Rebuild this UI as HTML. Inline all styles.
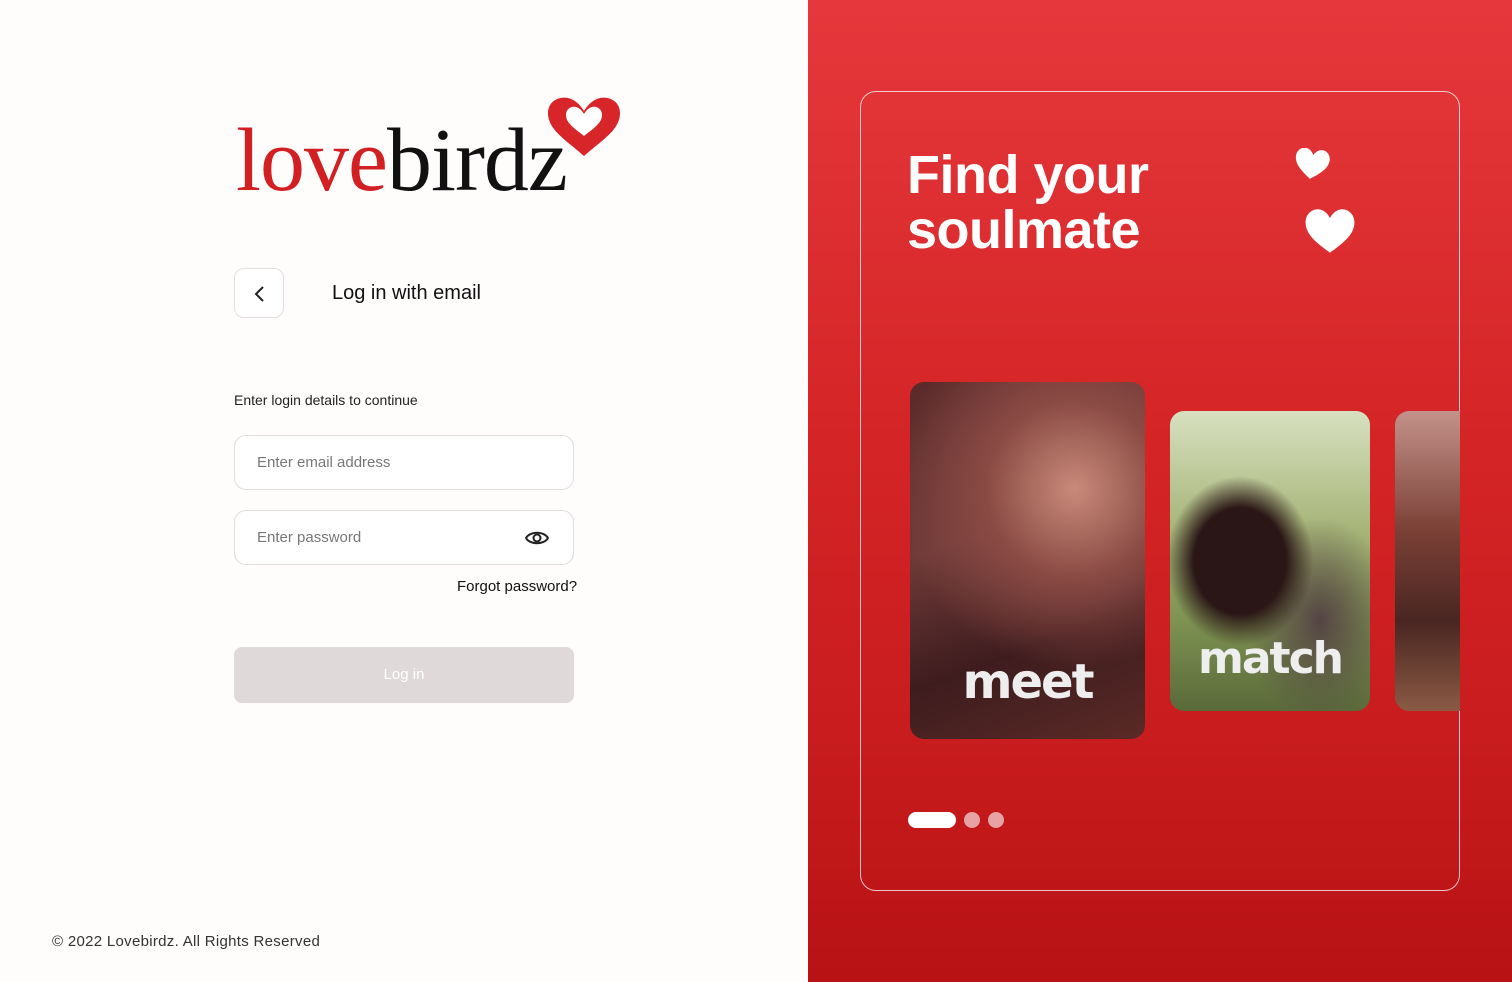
<!DOCTYPE html>
<html><head><meta charset="utf-8"><style>
*{margin:0;padding:0;box-sizing:border-box}
html,body{width:1512px;height:982px;overflow:hidden}
body{font-family:"Liberation Sans",sans-serif;background:#fffcfc;position:relative}
.left{position:absolute;left:0;top:0;width:808px;height:982px;background:#fffcfc;overflow:hidden}
.right{position:absolute;left:808px;top:0;width:704px;height:982px;background:linear-gradient(180deg,#e6383c 0%,#d42426 45%,#c81c1e 75%,#b81214 100%);overflow:hidden}
.logo{position:absolute;left:236px;top:116px;font-family:"Liberation Serif",serif;font-size:90px;letter-spacing:-1px;line-height:1;white-space:nowrap}
.logo .l{color:#d11f22}.logo .b{color:#111}
.back{position:absolute;left:234px;top:268px;width:50px;height:50px;border:1px solid #e4dede;border-radius:10px;background:#fff}
.title{position:absolute;left:332px;top:282px;font-size:20px;color:#111}
.sub{position:absolute;left:234px;top:392px;font-size:14px;color:#222}
.inp{position:absolute;left:234px;width:340px;height:55px;border:1px solid #e2dcdc;border-radius:12px;background:#fff;font-size:15px;color:#777;padding:18px 22px}
.forgot{position:absolute;left:457px;top:578px;font-size:15px;color:#111;width:117px;text-align:right;white-space:nowrap}
.btn{position:absolute;left:234px;top:647px;width:340px;height:56px;border-radius:8px;background:#dfd9d9;color:#fff;font-size:15px;text-align:center;line-height:56px}
.foot{position:absolute;left:52px;top:933px;font-size:15px;color:#333;letter-spacing:.3px}
.box{position:absolute;left:52px;top:91px;width:600px;height:800px;border:1px solid rgba(255,255,255,.75);border-radius:16px;overflow:hidden}
.h{position:absolute;left:99px;top:148px;color:#fff;font-family:"Liberation Sans",sans-serif;font-weight:bold;font-size:54px;line-height:55px;letter-spacing:-0.5px}
.card{position:absolute;border-radius:14px;overflow:hidden}
.card span{position:absolute;left:0;right:0;text-align:center;color:#eee;font-family:"DejaVu Sans",sans-serif;font-weight:bold;letter-spacing:-2px}
.dot{position:absolute;top:812px;height:16px;border-radius:8px}
</style></head><body>
<div class="left">
<div class="logo"><span class="l">love</span><span class="b">birdz</span></div>
<svg style="position:absolute;left:546px;top:96px" width="76" height="62" viewBox="0 0 76 62"><path d="M38 60 C20 44 2 34 2 17 C2 6 12 0 22 2 C30 4 35 10 38 15 C41 10 46 4 54 2 C64 0 74 6 74 17 C74 34 56 44 38 60Z" fill="#d7252a"/><path d="M38 40 C28 32 20 27 20 19 C20 13 25 10 30 11 C34 12 36 15 38 18 C40 15 42 12 46 11 C51 10 56 13 56 19 C56 27 48 32 38 40Z" fill="#fff"/></svg>
<div class="back"><svg width="50" height="50"><path d="M28 18 L21 25 L28 32" stroke="#222" stroke-width="2" fill="none"/></svg></div>
<div class="title">Log in with email</div>
<div class="sub">Enter login details to continue</div>
<div class="inp" style="top:435px">Enter email address</div>
<div class="inp" style="top:510px">Enter password
<svg style="position:absolute;left:290px;top:16px" width="24" height="22" viewBox="0 0 24 22"><path d="M1 11 C5 4 19 4 23 11 C19 18 5 18 1 11Z" fill="none" stroke="#222" stroke-width="2"/><circle cx="12" cy="11" r="3.5" fill="none" stroke="#222" stroke-width="2"/></svg></div>
<div class="forgot">Forgot password?</div>
<div class="btn">Log in</div>
<div class="foot">© 2022 Lovebirdz. All Rights Reserved</div>
</div>
<div class="right">
<div class="box"></div>
<div class="h">Find your<br>soulmate</div>
<svg style="position:absolute;left:486px;top:148px" width="36" height="32" viewBox="0 0 36 32"><path d="M18 31 C8 24 1 18 1 10 C1 4 6 0 11 1 C15 2 17 5 18 7 C19 5 21 2 25 1 C30 0 35 4 35 10 C35 18 28 24 18 31Z" fill="#fff" transform="rotate(8 18 16)"/></svg>
<svg style="position:absolute;left:495px;top:208px" width="54" height="46" viewBox="0 0 36 32"><path d="M18 31 C8 24 1 18 1 10 C1 4 6 0 11 1 C15 2 17 5 18 7 C19 5 21 2 25 1 C30 0 35 4 35 10 C35 18 28 24 18 31Z" fill="#fff"/></svg>
<div class="card" style="left:102px;top:382px;width:235px;height:357px;background:radial-gradient(circle at 70% 30%,#c98a7a 0%,#8a4a44 30%,transparent 60%),linear-gradient(160deg,#5a2a2a 0%,#6e3a38 40%,#3e1c1e 70%,#5a2a26 100%)"><span style="top:272px;font-size:48px">meet</span></div>
<div class="card" style="left:362px;top:411px;width:200px;height:300px;background:radial-gradient(ellipse at 35% 50%,#2a1616 0%,#2a1616 25%,transparent 40%),radial-gradient(ellipse at 75% 70%,#554444 0%,transparent 35%),linear-gradient(180deg,#d8e0c0 0%,#a6b478 40%,#7e9252 70%,#5a6a3a 100%)"><span style="top:222px;font-size:44px">match</span></div>
<div class="card" style="left:587px;top:411px;width:65px;height:300px;border-radius:14px 0 0 14px;background:linear-gradient(180deg,#c4928a 0%,#7a4036 40%,#4a2622 70%,#8a5a44 100%)"></div>
<div class="dot" style="left:100px;width:48px;background:#fff"></div>
<div class="dot" style="left:156px;width:16px;background:rgba(255,255,255,.6)"></div>
<div class="dot" style="left:180px;width:16px;background:rgba(255,255,255,.6)"></div>
</div>
</body></html>
